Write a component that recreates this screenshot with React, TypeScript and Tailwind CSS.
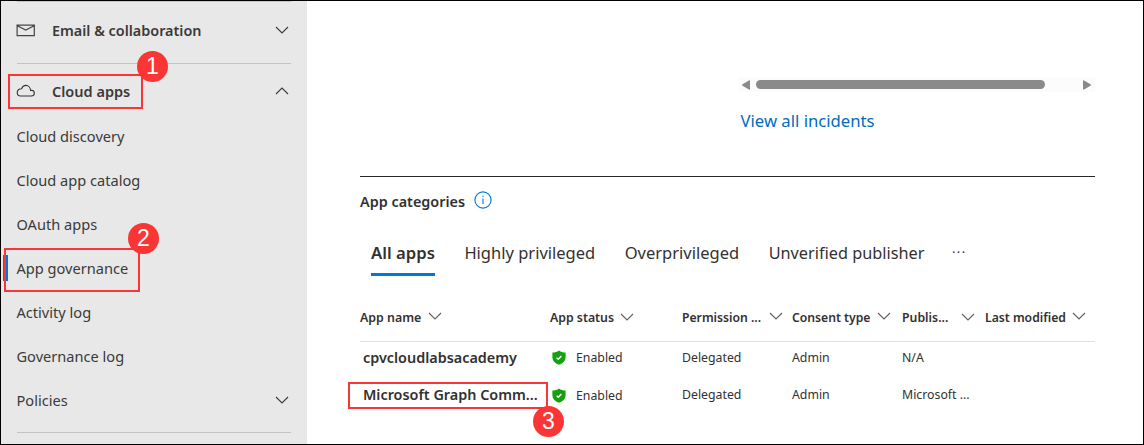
import type { ReactNode } from "react";

function Chevron({ up = false, className = "" }: { up?: boolean; className?: string }) {
  return (
    <svg viewBox="0 0 14 8" className={`h-2 w-3.5 shrink-0 ${className}`} fill="none" stroke="currentColor" strokeWidth="1.1">
      <path d={up ? "M1 7 7 1l6 6" : "M1 1l6 6 6-6"} />
    </svg>
  );
}

function MailIcon() {
  return (
    <svg viewBox="0 0 19 13" className="mb-0.5 h-[13px] w-[19px] shrink-0" fill="none" stroke="#444" strokeWidth="1.2">
      <path d="M1.100 1.100h17.200v10.600H1.100zM1.300 1.800l8.400 4.300 8.400-4.300" />
    </svg>
  );
}

function CloudIcon() {
  return (
    <svg viewBox="0 0 19 13" className="mb-0.5 h-[13px] w-[19px] shrink-0" fill="none" stroke="#333" strokeWidth="1.1">
      <path d="M4.600 12H15.300a2.900 2.900 0 0 0 .2-5.800l-.9.100C14.300 3.600 12.300 1.400 10 1.400 7.900 1.400 6.300 2.800 5.700 4.700 3 4.600 1.200 6.300 1.200 8.500c0 2 1.500 3.500 3.400 3.500z" />
    </svg>
  );
}

function InfoIcon() {
  return (
    <svg viewBox="0 0 18 18" className="mb-[5px] size-[18px] shrink-0" fill="none" stroke="#0078d4" strokeWidth="1.1">
      <circle cx="9" cy="9" r="8.1" />
      <path d="M9 7.500v5.500M9 4.700v1.300" />
    </svg>
  );
}

function ShieldIcon() {
  return (
    <svg viewBox="0 0 14 15" className="h-[15px] w-[14px] shrink-0">
      <path d="M7 .5C8.800 1.900 11 2.500 13.600 2.500v5c0 3.400-2.300 5.800-6.600 7.200C2.700 13.300.4 10.900.4 7.500v-5C3 2.500 5.200 1.900 7 .5z" fill="#13a10e" />
      <path d="M4.600 7.700l1.700 1.600 3.100-3.300" fill="none" stroke="#fff" strokeWidth="1.300" />
    </svg>
  );
}

const links = [
  { label: "Cloud discovery" },
  { label: "Cloud app catalog" },
  { label: "OAuth apps" },
  { label: "App governance", active: true },
  { label: "Activity log" },
  { label: "Governance log" },
];

function Sidebar() {
  return (
    <nav className="flex h-full w-[306px] shrink-0 flex-col bg-[#e8e8e8] text-[14.6px] text-[#3b3a39]">
      <div className="mx-4 h-px shrink-0 bg-[#c4c4c4]" />
      <div className="flex h-[61px] shrink-0 items-center pr-[18.5px] pb-[3px] pl-[15px]">
        <MailIcon />
        <span className="ml-[17px] flex-1 text-[14.4px] font-semibold">Email &amp; collaboration</span>
        <Chevron className="mb-0.5" />
      </div>
      <div className="mx-4 h-px shrink-0 bg-[#c4c4c4]" />
      <div className="flex h-[50px] shrink-0 items-center pt-[5px] pr-[18.5px] pl-[15px]">
        <CloudIcon />
        <span className="ml-[17px] flex-1 text-[14.5px] font-semibold">Cloud apps</span>
        <Chevron up className="mb-0.5" />
      </div>
      {links.map((l) => (
        <div key={l.label} className="flex h-11 shrink-0 items-center">
          <span className={`ml-0.5 h-[26px] w-[5px] ${l.active ? "bg-[#0078d4]" : ""}`} />
          <span className="ml-[8.5px] pt-0.5">{l.label}</span>
        </div>
      ))}
      <div className="flex h-11 shrink-0 items-center pr-[18.5px] pl-[15.5px]">
        <span className="flex-1 pt-0.5">Policies</span>
        <Chevron />
      </div>
      <div className="mx-4 mt-[10px] h-px shrink-0 bg-[#c4c4c4]" />
    </nav>
  );
}

function ScrollBar() {
  return (
    <div className="mt-[76px] ml-[378px] flex h-[15px] w-[357px] items-center bg-[#fcfcfc] px-1">
      <svg viewBox="0 0 8 10" className="h-[10px] w-2" fill="#8a8a8a">
        <path d="M8 1v8q0 1-1 .5L.5 5.700q-.8-.7 0-1.400L7 .500q1-.5 1 .5z" />
      </svg>
      <div className="ml-1.5 h-[9px] w-[289px] rounded-full bg-[#8a8a8a]" />
      <svg viewBox="0 0 8 10" className="ml-auto h-[10px] w-2" fill="#8a8a8a">
        <path d="M0 1v8q0 1 1 .5l6.500-3.800q.8-.7 0-1.400L1 .500q-1-.5-1 .5z" />
      </svg>
    </div>
  );
}

function Head({ children, className }: { children: ReactNode; className: string }) {
  return (
    <div className={`flex shrink-0 items-center ${className}`}>
      <span className="whitespace-nowrap">{children}</span>
      <Chevron className="mb-[3px] text-[#605e5c]" />
    </div>
  );
}

function Row({ name, publisher }: { name: string; publisher: string }) {
  return (
    <div className="flex h-[37.5px] shrink-0 items-center text-[12.3px] whitespace-nowrap">
      <span className="w-[192px] pl-[3px] text-[14.4px] font-semibold">{name}</span>
      <ShieldIcon />
      <span className="w-[116px] pt-px pl-[10px]">Enabled</span>
      <span className="w-[110px]">Delegated</span>
      <span className="w-[110px]">Admin</span>
      <span>{publisher}</span>
    </div>
  );
}

function Badge({ n, className }: { n: number; className: string }) {
  return (
    <div className={`absolute flex size-[31px] items-center justify-center rounded-full bg-[#fa3535] font-['Liberation_Sans',sans-serif] text-[23px] leading-none text-white ${className}`}>
      {n}
    </div>
  );
}

export default function App() {
  return (
    <div className="relative flex h-[445px] w-[1144px] overflow-hidden border border-black bg-white font-['Noto_Sans',sans-serif] text-[#323130]">
      <Sidebar />
      <main className="flex min-w-0 flex-1 flex-col pl-[53px]">
        <ScrollBar />
        <a className="mt-[17px] ml-[380.5px] text-[16.7px] leading-6 text-[#006cbe]">View all incidents</a>
        <div className="mt-[43px] h-px w-[735px] shrink-0 bg-[#292827]" />
        <div className="mt-[13px] flex h-6 items-center gap-[9px]">
          <h2 className="text-[14.4px] font-semibold">App categories</h2>
          <InfoIcon />
        </div>
        <div className="mt-[25px] ml-[11px] flex h-[37px] gap-[29.5px] text-[16.5px] leading-7 whitespace-nowrap">
          <span className="border-b-[3px] border-[#0078d4] text-[16.7px] font-semibold">All apps</span>
          <span>Highly privileged</span>
          <span>Overprivileged</span>
          <span className="text-[16.3px]">Unverified publisher</span>
          <span className="-ml-0.5 text-[13px] leading-[26px] tracking-[1.4px]">···</span>
        </div>
        <div className="mt-[20px] flex h-[46px] w-[735px] shrink-0 items-center border-b border-[#e1dfdd] pb-[1px] text-[12.2px] font-semibold">
          <Head className="w-[190px] gap-[7px] text-[12.4px]">App name</Head>
          <Head className="w-[132px] gap-[6px] text-[12.3px]">App status</Head>
          <Head className="w-[110px] gap-[8px]">Permission ...</Head>
          <Head className="w-[110px] gap-[6px]">Consent type</Head>
          <Head className="w-[83px] gap-[13px] text-[12.3px]">Publis...</Head>
          <Head className="gap-[6px]">Last modified</Head>
        </div>
        <div className="-mt-[3px] flex flex-col">
          <Row name="cpvcloudlabsacademy" publisher="N/A" />
          <Row name="Microsoft Graph Comm..." publisher="Microsoft ..." />
        </div>
      </main>
      <div className="absolute top-[73px] left-[7px] h-[35px] w-[135px] border-2 border-[#fa3535]" />
      <div className="absolute top-[247px] left-[3px] h-[44px] w-[136px] border-2 border-[#fa3535]" />
      <div className="absolute top-[381px] left-[347px] h-[27px] w-[200px] border-2 border-[#fa3535]" />
      <Badge n={1} className="top-[49.5px] left-[136px]" />
      <Badge n={2} className="top-[221.5px] left-[127px]" />
      <Badge n={3} className="top-[405px] left-[532px]" />
    </div>
  );
}
